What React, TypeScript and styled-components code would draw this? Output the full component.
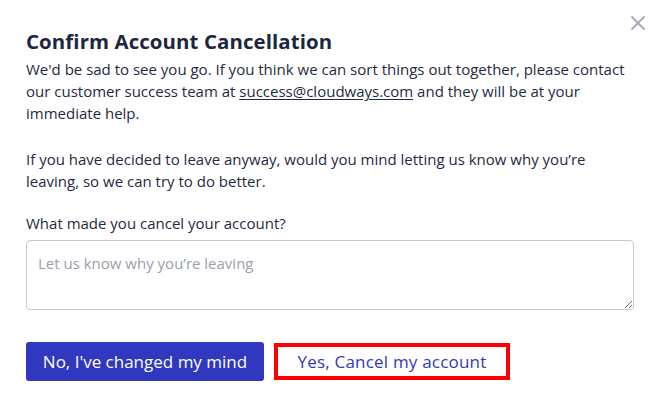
import React, { useState } from 'react'
import styled, { createGlobalStyle } from 'styled-components'

const GlobalStyle = createGlobalStyle`
  html, body {
    margin: 0;
    padding: 0;
    background: #ffffff;
  }
  body {
    font-family: 'Open Sans', 'Liberation Sans', sans-serif;
    -webkit-font-smoothing: antialiased;
  }
`

const Modal = styled.div`
  position: relative;
  width: 658px;
  height: 410px;
  box-sizing: border-box;
  padding: 27px 24px 0 26px;
  background: #fff;
  color: #1f2a44;
`

const CloseButton = styled.button`
  position: absolute;
  top: 14px;
  right: 11px;
  width: 18px;
  height: 18px;
  padding: 0;
  border: none;
  background: transparent;
  cursor: pointer;
  display: flex;
  align-items: center;
  justify-content: center;
`

const Title = styled.h2`
  margin: 0 0 3px;
  font-size: 20.4px;
  font-weight: 700;
  line-height: 28px;
  color: #1c2640;
  letter-spacing: 0.1px;
`

const Paragraph = styled.p<{ gap: number }>`
  margin: 0 0 ${({ gap }) => gap}px;
  font-size: 15px;
  line-height: 22px;
  color: #1f2a44;
`

const MailLink = styled.a`
  color: inherit;
  text-decoration: underline;
  text-underline-offset: 2px;
`

const Label = styled.label`
  display: block;
  margin: 0 0 6px;
  font-size: 15px;
  line-height: 22px;
  color: #1f2a44;
`

const Reason = styled.textarea`
  display: block;
  width: 608px;
  height: 70px;
  box-sizing: border-box;
  padding: 12px 11px;
  border: 1px solid #c3c8d3;
  border-radius: 4px;
  font-family: inherit;
  font-size: 15px;
  line-height: 20px;
  color: #1f2a44;
  resize: vertical;
  outline: none;

  &::placeholder {
    color: #9aa0ad;
  }
`

const Actions = styled.div`
  display: flex;
  align-items: center;
  gap: 10px;
  margin-top: 32px;
`

const PrimaryButton = styled.button`
  width: 238px;
  height: 39px;
  padding: 0;
  border: none;
  border-radius: 3px;
  background: #2f38be;
  color: #fff;
  font-family: inherit;
  font-size: 17px;
  cursor: pointer;
`

const CancelButton = styled.button`
  width: 236px;
  height: 37px;
  padding: 0;
  box-sizing: border-box;
  border: 4px solid #ff0000;
  background: #fff;
  color: #3438b8;
  font-family: inherit;
  font-size: 17px;
  letter-spacing: 0.2px;
  cursor: pointer;
`

export default function App() {
  const [reason, setReason] = useState('')

  return (
    <>
      <GlobalStyle />
      <Modal>
        <CloseButton aria-label="Close">
          <svg width="14" height="14" viewBox="0 0 14 14">
            <path d="M1 1L13 13M13 1L1 13" stroke="#a3aab8" strokeWidth="1.8" strokeLinecap="round" />
          </svg>
        </CloseButton>
        <Title>Confirm Account Cancellation</Title>
        <Paragraph gap={24}>
          We'd be sad to see you go. If you think we can sort things out together, please contact our customer
          success team at <MailLink href="mailto:success@cloudways.com">success@cloudways.com</MailLink> and they
          will be at your immediate help.
        </Paragraph>
        <Paragraph gap={20}>
          If you have decided to leave anyway, would you mind letting us know why you’re leaving, so we can try to do
          better.
        </Paragraph>
        <Label htmlFor="reason">What made you cancel your account?</Label>
        <Reason
          id="reason"
          placeholder="Let us know why you’re leaving"
          value={reason}
          onChange={e => setReason(e.target.value)}
        />
        <Actions>
          <PrimaryButton>No, I've changed my mind</PrimaryButton>
          <CancelButton>Yes, Cancel my account</CancelButton>
        </Actions>
      </Modal>
    </>
  )
}
